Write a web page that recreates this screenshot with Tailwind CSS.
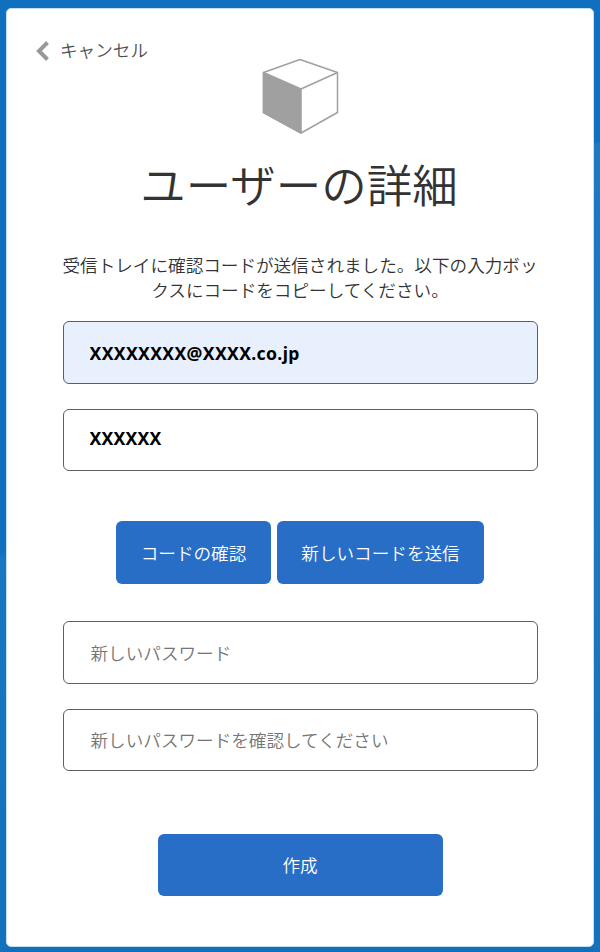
<!DOCTYPE html>
<html lang="ja">
<head>
<meta charset="utf-8">
<title>ユーザーの詳細</title>
<script src="https://cdn.jsdelivr.net/npm/@tailwindcss/browser@4"></script>
</head>
<body class="h-[952px] overflow-hidden bg-[#1170be] bg-[linear-gradient(to_bottom,#1070bf_550px,#1976c2_558px,#1471bb_940px),linear-gradient(to_bottom,#1070bf_142px,#1e79c1_144px,#1e77c1_500px,#1471bb_940px)] bg-[length:6px_100%,6px_100%] bg-[position:left_top,right_top] bg-no-repeat px-1.5 pt-2 font-['Noto_Sans_CJK_JP',sans-serif] text-[17.6px] font-[350] text-[#333]">
<main class="flex h-[939px] flex-col items-center rounded-[5px] border border-[#c5dff1] bg-white">
  <header class="flex h-[126px] w-full items-start pl-[29px] pt-[28px]">
    <a class="flex h-[26px] w-[190px] items-center leading-[26px] text-[#505050]">
      <svg class="mr-[11px] mt-px h-5 w-[13px]" viewBox="0 0 13 20" fill="none" stroke="#999" stroke-width="4"><path d="M11.5 1.5L3 10l8.500 8.500"/></svg>キャンセル
    </a>
    <svg class="ml-[36px] mt-[20px] h-[78px] w-[78px]" viewBox="0 0 78 78" fill="none" stroke="#a0a0a0" stroke-width="1.500" stroke-linejoin="round"><path d="M1.500 15.500L38 2.500l37.500 13v40L39 76 1.500 55.500z"/><path d="M1.500 15.500l37.500 16.500v44L1.500 55.500z" fill="#a0a0a0"/><path d="M39 32l36.500-16.500"/></svg>
  </header>
  <h1 class="mt-[15px] h-[67px] text-[45.5px] leading-[66px] whitespace-nowrap -translate-x-px">ユーザーの詳細</h1>
  <p class="mt-[35px] h-[50px] text-center leading-[25px] whitespace-nowrap">受信トレイに確認コードが送信されました。以下の入力ボッ<br>クスにコードをコピーしてください。</p>
  <form class="flex w-[475px] flex-col items-center">
    <input class="mt-[19px] h-[63px] w-full rounded-[6px] border border-[#5b5e66] bg-[#e8f0fe] px-[26px] pt-px font-['Noto_Sans'] text-[17.6px] font-bold tracking-[0.35px] text-black" value="XXXXXXXX@XXXX.co.jp">
    <input class="mt-[25px] h-[62px] w-full rounded-[6px] border border-[#606060] px-[26px] pb-[4px] font-['Noto_Sans'] text-[17.6px] font-bold tracking-[0.2px] text-black" value="XXXXXX">
    <div class="mt-[50px] flex gap-1.5">
      <button type="button" class="h-[63px] w-[155px] rounded-[6px] bg-[#286ec7] pt-px text-white">コードの確認</button>
      <button type="button" class="h-[63px] w-[207px] rounded-[6px] bg-[#286ec7] pt-px text-white">新しいコードを送信</button>
    </div>
    <input class="mt-[37px] h-[63px] w-full rounded-[6px] border border-[#606060] px-[27px] pb-px placeholder:text-[#757575]" placeholder="新しいパスワード">
    <input class="mt-[25px] h-[62px] w-full rounded-[6px] border border-[#606060] px-[27px] pb-[2px] placeholder:text-[#757575]" placeholder="新しいパスワードを確認してください">
    <button type="button" class="mt-[63px] h-[62px] w-[285px] rounded-[6px] bg-[#286ec7] text-white">作成</button>
  </form>
</main>
</body>
</html>
